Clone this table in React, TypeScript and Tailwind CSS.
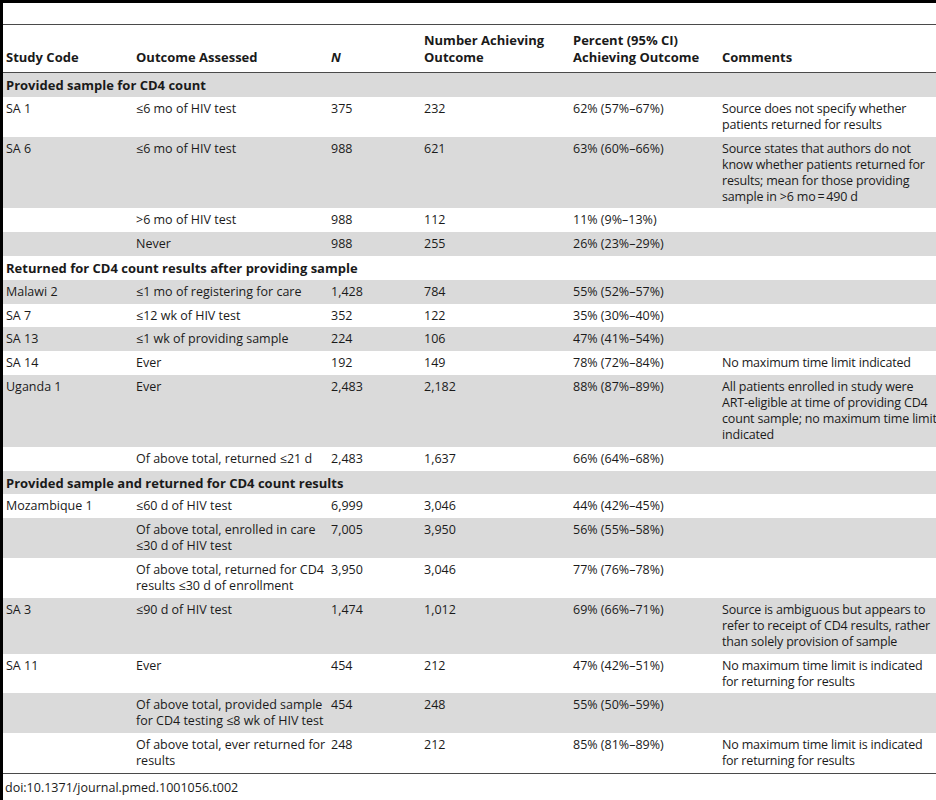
type Row = {
  section?: string;
  code?: string;
  outcome?: string[];
  n?: string;
  achieving?: string;
  percent?: string;
  comments?: string[];
};

const rows: Row[] = [
  { section: "Provided sample for CD4 count" },
  { code: "SA 1", outcome: ["≤6 mo of HIV test"], n: "375", achieving: "232", percent: "62% (57%–67%)", comments: ["Source does not specify whether", "patients returned for results"] },
  { code: "SA 6", outcome: ["≤6 mo of HIV test"], n: "988", achieving: "621", percent: "63% (60%–66%)", comments: ["Source states that authors do not", "know whether patients returned for", "results; mean for those providing", "sample in >6 mo\u2009=\u2009490 d"] },
  { outcome: [">6 mo of HIV test"], n: "988", achieving: "112", percent: "11% (9%–13%)" },
  { outcome: ["Never"], n: "988", achieving: "255", percent: "26% (23%–29%)" },
  { section: "Returned for CD4 count results after providing sample" },
  { code: "Malawi 2", outcome: ["≤1 mo of registering for care"], n: "1,428", achieving: "784", percent: "55% (52%–57%)" },
  { code: "SA 7", outcome: ["≤12 wk of HIV test"], n: "352", achieving: "122", percent: "35% (30%–40%)" },
  { code: "SA 13", outcome: ["≤1 wk of providing sample"], n: "224", achieving: "106", percent: "47% (41%–54%)" },
  { code: "SA 14", outcome: ["Ever"], n: "192", achieving: "149", percent: "78% (72%–84%)", comments: ["No maximum time limit indicated"] },
  { code: "Uganda 1", outcome: ["Ever"], n: "2,483", achieving: "2,182", percent: "88% (87%–89%)", comments: ["All patients enrolled in study were", "ART-eligible at time of providing CD4", "count sample; no maximum time limit", "indicated"] },
  { outcome: ["Of above total, returned ≤21 d"], n: "2,483", achieving: "1,637", percent: "66% (64%–68%)" },
  { section: "Provided sample and returned for CD4 count results" },
  { code: "Mozambique 1", outcome: ["≤60 d of HIV test"], n: "6,999", achieving: "3,046", percent: "44% (42%–45%)" },
  { outcome: ["Of above total, enrolled in care", "≤30 d of HIV test"], n: "7,005", achieving: "3,950", percent: "56% (55%–58%)" },
  { outcome: ["Of above total, returned for CD4", "results ≤30 d of enrollment"], n: "3,950", achieving: "3,046", percent: "77% (76%–78%)" },
  { code: "SA 3", outcome: ["≤90 d of HIV test"], n: "1,474", achieving: "1,012", percent: "69% (66%–71%)", comments: ["Source is ambiguous but appears to", "refer to receipt of CD4 results, rather", "than solely provision of sample"] },
  { code: "SA 11", outcome: ["Ever"], n: "454", achieving: "212", percent: "47% (42%–51%)", comments: ["No maximum time limit is indicated", "for returning for results"] },
  { outcome: ["Of above total, provided sample", "for CD4 testing ≤8 wk of HIV test"], n: "454", achieving: "248", percent: "55% (50%–59%)" },
  { outcome: ["Of above total, ever returned for", "results"], n: "248", achieving: "212", percent: "85% (81%–89%)", comments: ["No maximum time limit is indicated", "for returning for results"] },
];

function Lines({ items }: { items?: string[] }) {
  if (!items) return null;
  return (
    <>
      {items.map((t, i) => (
        <div key={i} className="whitespace-nowrap">{t}</div>
      ))}
    </>
  );
}

export default function App() {
  const cell = "pl-[3px] pt-1 pb-[3.8px] align-top whitespace-nowrap";
  const head = "pl-[3px] pt-[7px] pb-[6px] align-bottom text-left font-bold text-[13px] leading-[17px]";
  return (
    <div className="w-[936px] h-[800px] overflow-hidden bg-white border-l-[3px] border-black text-[#1a1a1a] font-['Open_Sans',sans-serif] text-[12.5px] leading-4">
      <div className="border-t-[3px] border-black h-[24px]" />
      <table className="table-fixed border-collapse w-[933px]">
        <colgroup>
          <col className="w-[130px]" />
          <col className="w-[195px]" />
          <col className="w-[93px]" />
          <col className="w-[149px]" />
          <col className="w-[149px]" />
          <col className="w-[217px]" />
        </colgroup>
        <thead>
          <tr className="border-t border-b border-[#4a4a4a]">
            <th className={head}>Study Code</th>
            <th className={head}>Outcome Assessed</th>
            <th className={head}><i>N</i></th>
            <th className={head}>
              <div>Number Achieving</div>
              <div>Outcome</div>
            </th>
            <th className={head}>
              <div>Percent (95% CI)</div>
              <div>Achieving Outcome</div>
            </th>
            <th className={head}>Comments</th>
          </tr>
        </thead>
        <tbody className="border-b border-[#4a4a4a]">
          {rows.map((r, i) => {
            const bg = i % 2 === 0 ? "bg-[#dadada]" : "bg-white";
            if (r.section) {
              return (
                <tr key={i} className={bg}>
                  <td colSpan={6} className={cell + " font-bold text-[13px]"}>{r.section}</td>
                </tr>
              );
            }
            return (
              <tr key={i} className={bg}>
                <td className={cell}>{r.code}</td>
                <td className={cell}><Lines items={r.outcome} /></td>
                <td className={cell}>{r.n}</td>
                <td className={cell}>{r.achieving}</td>
                <td className={cell}>{r.percent}</td>
                <td className={cell + " tracking-[-0.18px]"}><Lines items={r.comments} /></td>
              </tr>
            );
          })}
        </tbody>
      </table>
      <div className="pt-[6px] pl-[2px]">doi:10.1371/journal.pmed.1001056.t002</div>
    </div>
  );
}
